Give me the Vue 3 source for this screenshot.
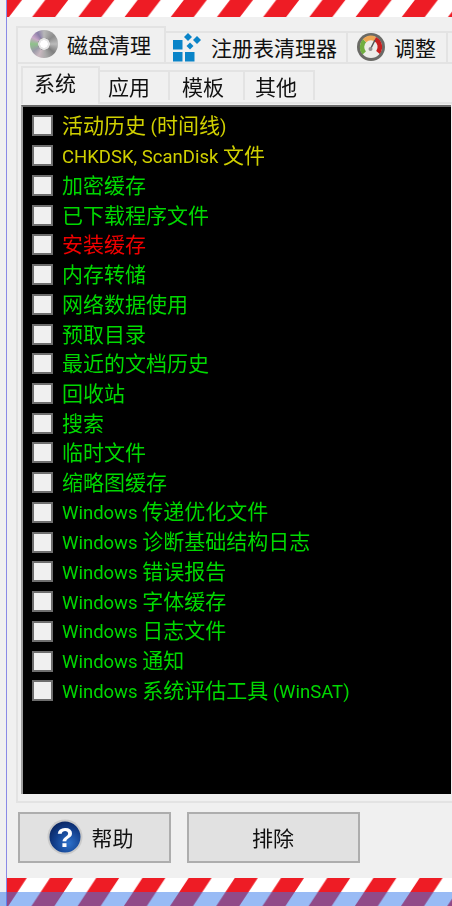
<script setup>
const source = [
  ['活动历史 (时间线)', 'yellow'],
  ['CHKDSK, ScanDisk 文件', 'yellow'],
  ['加密缓存', 'green'],
  ['已下载程序文件', 'green'],
  ['安装缓存', 'red'],
  ['内存转储', 'green'],
  ['网络数据使用', 'green'],
  ['预取目录', 'green'],
  ['最近的文档历史', 'green'],
  ['回收站', 'green'],
  ['搜索', 'green'],
  ['临时文件', 'green'],
  ['缩略图缓存', 'green'],
  ['Windows 传递优化文件', 'green'],
  ['Windows 诊断基础结构日志', 'green'],
  ['Windows 错误报告', 'green'],
  ['Windows 字体缓存', 'green'],
  ['Windows 日志文件', 'green'],
  ['Windows 通知', 'green'],
  ['Windows 系统评估工具 (WinSAT)', 'green'],
]
const rows = source.map(([text, tone]) => ({
  text,
  tone,
  parts: text
    .split(/([\u4e00-\u9fff]+)/)
    .filter(Boolean)
    .map((s) => ({ s, latin: !/[\u4e00-\u9fff]/.test(s) })),
}))
const subTabs = ['应用', '模板', '其他']
</script>

<template>
  <div class="app">
    <svg class="stripes" width="445" height="17">
      <defs>
        <pattern id="topStripe" width="46.2" height="17" patternUnits="userSpaceOnUse">
          <polygon points="-21,17 2,17 15,0 -8,0" fill="#ee1c25" />
          <polygon points="25.2,17 48.2,17 61.2,0 38.2,0" fill="#ee1c25" />
        </pattern>
      </defs>
      <rect width="445" height="17" fill="url(#topStripe)" />
    </svg>

    <main class="content">
      <nav class="tabs">
        <div class="tab active">
          <span class="disc"></span>
          <span>磁盘清理</span>
        </div>
        <div class="tab reg">
          <svg class="ico" width="30" height="30" viewBox="0 0 30 30">
            <g fill="#0a84c8">
              <rect x="0" y="8" width="9.5" height="9.5" />
              <rect x="0" y="20" width="9.5" height="9.5" />
              <rect x="12" y="20" width="9.5" height="9.5" />
              <path d="M15 1 L19 5 L15 9 L11 5Z" />
              <path d="M24 4 L28 8 L24 12 L20 8Z" />
              <path d="M17 10.5 L20.5 14 L17 17.5 L13.5 14Z" />
            </g>
          </svg>
          <span>注册表清理器</span>
        </div>
        <div class="tab tune">
          <svg class="ico" width="30" height="30" viewBox="0 0 30 30">
            <circle cx="15" cy="15" r="14" fill="#6a6a66" />
            <circle cx="15" cy="15" r="11" fill="#ecece8" />
            <path d="M8.2 21 A9 9 0 0 1 8.6 8.7" fill="none" stroke="#6fae3f" stroke-width="4.5" />
            <path d="M8.6 8.7 A9 9 0 0 1 19 7" fill="none" stroke="#eda552" stroke-width="4.5" />
            <path d="M19 7 A9 9 0 0 1 22 20.5" fill="none" stroke="#c81e1e" stroke-width="4.5" />
            <path d="M14.5 17 L19 8" stroke="#555" stroke-width="1.5" />
            <circle cx="14.5" cy="17" r="2" fill="#8f8f8f" />
          </svg>
          <span>调整</span>
        </div>
        <div class="tab rest"></div>
      </nav>

      <section class="outer">
        <nav class="subtabs">
          <div class="subtab active">系统</div>
          <div v-for="t in subTabs" :key="t" class="subtab">{{ t }}</div>
        </nav>
        <div class="inner">
          <ul class="list">
            <li v-for="r in rows" :key="r.text" class="row">
              <span class="check"></span>
              <span :class="['label', r.tone]"><span v-for="(p, i) in r.parts" :key="i" :class="{ latin: p.latin }">{{ p.s }}</span></span>
            </li>
          </ul>
        </div>
      </section>

      <footer class="buttons">
        <button class="btn help">
          <svg width="36" height="36" viewBox="0 0 36 36">
            <defs>
              <radialGradient id="helpG" cx=".62" cy=".7" r=".75">
                <stop offset="0" stop-color="#2d72cc" />
                <stop offset=".6" stop-color="#123f8c" />
                <stop offset="1" stop-color="#0a2560" />
              </radialGradient>
            </defs>
            <circle cx="18" cy="18" r="17.5" fill="#c9c9c9" />
            <circle cx="18" cy="18" r="15.5" fill="url(#helpG)" />
            <text x="18" y="28" text-anchor="middle" class="q">?</text>
          </svg>
          <span>帮助</span>
        </button>
        <button class="btn exclude">排除</button>
      </footer>
    </main>

    <svg class="stripes" width="445" height="28">
      <defs>
        <pattern id="botStripe" width="46.2" height="28" patternUnits="userSpaceOnUse">
          <polygon points="-3.2,0 19.8,0 1.3,28 -21.7,28" fill="#ee1c25" />
          <polygon points="43,0 66,0 47.5,28 24.5,28" fill="#ee1c25" />
        </pattern>
      </defs>
      <rect width="445" height="28" fill="url(#botStripe)" />
    </svg>
    <div class="blue"></div>
  </div>
</template>

<style>
html, body { margin: 0; padding: 0; background: #f0f0f0; }
</style>

<style scoped>
.app {
  position: relative;
  width: 452px;
  height: 906px;
  overflow: hidden;
  box-sizing: border-box;
  padding-left: 7px;
  background: #f0f0f0;
  font-family: Roboto, "Noto Sans CJK SC", sans-serif;
  font-size: 21px;
  color: #111;
}
.app::before {
  content: "";
  position: absolute;
  left: 6px;
  top: 0;
  bottom: 0;
  width: 1px;
  background: #8a8ae6;
}
.stripes { display: block; background: #fff; }
.content {
  height: 861px;
  box-sizing: border-box;
  padding: 9px 0 0 9px;
  display: flex;
  flex-direction: column;
  filter: blur(.35px);
}
.tabs {
  display: flex;
  height: 36px;
  align-items: flex-end;
  position: relative;
  z-index: 1;
}
.tab {
  display: flex;
  align-items: center;
  height: 31px;
  box-sizing: border-box;
  border: 2px solid #e3e3e3;
  border-bottom: 0;
  border-left-width: 0;
  padding-bottom: 2px;
  background: #f0f0f0;
  white-space: nowrap;
}
.tab.active {
  width: 150px;
  height: 36px;
  border-left-width: 2px;
  padding-left: 12px;
  gap: 9px;
}
.disc {
  flex: none;
  width: 28px;
  height: 28px;
  border-radius: 50%;
  background:
    radial-gradient(circle, #fff 0 3.5px, #e6e6e6 4px 5.5px, #9a9a9a 6px, transparent 6.5px),
    conic-gradient(#b8b8b8 0deg, #8c8c8c 50deg, #bbb 90deg, #7f7f7f 130deg, #a8a8a8 170deg, #c9b8c0 205deg, #9a9aa8 235deg, #8fc28a 270deg, #c9a8c8 300deg, #8b7fa8 330deg, #b8b8b8 360deg);
}
.tab.reg { width: 182px; padding-left: 7px; gap: 8px; }
.tab.tune { width: 100px; padding-left: 8px; gap: 8px; }
.tab.rest { flex: 1; border-right: 0; }
.outer {
  flex: 0 0 741px;
  margin-right: -10px;
  box-sizing: border-box;
  border: 2px solid #e3e3e3;
  padding: 2px 0 0 3px;
  display: flex;
  flex-direction: column;
}
.subtabs {
  display: flex;
  height: 38px;
  box-sizing: border-box;
  border-bottom: 2px solid #e3e3e3;
  align-items: flex-end;
}
.subtab {
  height: 30px;
  margin-bottom: 2px;
  box-sizing: border-box;
  border: 2px solid #e3e3e3;
  border-bottom: 0;
  border-left-width: 0;
  line-height: 32px;
}
.subtab:nth-child(2) { width: 70px; padding-left: 8px; }
.subtab:nth-child(3) { width: 75px; padding-left: 12px; }
.subtab:nth-child(4) { width: 70px; padding-left: 10px; }
.subtab.active {
  width: 79px;
  height: 38px;
  margin-bottom: -2px;
  padding-left: 11px;
  border-left-width: 2px;
  background: #f0f0f0;
  line-height: 32px;
}
.inner {
  width: 430px;
  height: 689px;
  margin-top: 1px;
  background: #000;
  border-top: 2px solid #696969;
  border-left: 2px solid #a0a0a0;
  box-sizing: border-box;
  overflow: hidden;
}
.list {
  list-style: none;
  margin: 0;
  padding: 4px 0 0 9px;
}
.row {
  display: flex;
  align-items: center;
  height: 29.74px;
  gap: 9px;
  white-space: nowrap;
}
.check {
  flex: none;
  width: 21px;
  height: 21px;
  box-sizing: border-box;
  border: 2px solid #6e6e6e;
  background: #f0f0f0;
}
.label {
  line-height: 29px;
  padding-top: 2px;
  font-size: 21px;
}
.latin {
  font-size: 18.5px;
}
.yellow { color: #d0d000; }
.green { color: #00d800; }
.red { color: #f00000; }
.buttons {
  display: flex;
  gap: 16px;
  margin-top: 9px;
  padding-left: 2px;
}
.btn {
  height: 51px;
  box-sizing: border-box;
  border: 2px solid #adadad;
  background: #e1e1e1;
  font: inherit;
  color: #111;
  padding: 0 0 2px;
  display: flex;
  align-items: center;
  justify-content: center;
}
.btn.help { width: 153px; gap: 9px; padding-right: 9px; }
.btn.exclude { width: 173px; padding-right: 1px; }
.q {
  font-family: "Liberation Sans", sans-serif;
  font-weight: 700;
  font-size: 28px;
  fill: #fff;
}
.blue {
  position: absolute;
  left: 0;
  right: 0;
  bottom: 0;
  height: 14px;
  background: rgba(51, 119, 235, .5);
}
</style>
